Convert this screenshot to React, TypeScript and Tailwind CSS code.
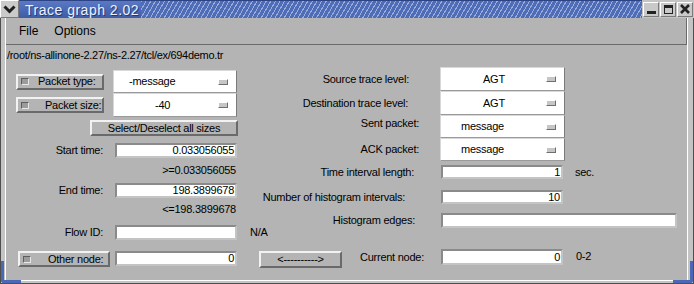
const font = "font-['Liberation_Sans',Arial,sans-serif]";

function Entry({ value = "", className = "" }: { value?: string; className?: string }) {
  return (
    <div
      className={`shrink-0 bg-white border-2 border-t-[#8a8a8a] border-l-[#8a8a8a] border-b-[#c4c4c4] border-r-[#c4c4c4] flex items-center justify-end pr-[1px] text-[11px] leading-none tracking-[-0.25px] text-black ${className}`}
    >
      {value}
    </div>
  );
}

function OptionBox({ text, className = "", textClass = "" }: { text: string; className?: string; textClass?: string }) {
  return (
    <div
      className={`shrink-0 bg-white border border-[#d8d8d8] border-r-[#7a7a7a] border-b-[#9a9a9a] flex items-center text-[11px] leading-none tracking-[-0.25px] text-black ${className}`}
    >
      <span className={textClass}>{text}</span>
      <span className="ml-auto mr-[8px] w-[10px] h-[6px] bg-[#c6c6c6] border border-t-white border-l-white border-b-[#6e6e6e] border-r-[#6e6e6e]" />
    </div>
  );
}

function Raised({ children, className = "" }: { children: React.ReactNode; className?: string }) {
  return (
    <div
      className={`shrink-0 bg-[#b4b4b4] border-2 border-t-[#f2f2f2] border-l-[#f2f2f2] border-b-[#6a6a6a] border-r-[#6a6a6a] flex items-center text-[11px] leading-none tracking-[-0.25px] text-black ${className}`}
    >
      {children}
    </div>
  );
}

function Indicator() {
  return (
    <span className="shrink-0 w-[8px] h-[7px] bg-[#9c9c9c] border border-t-[#5e5e5e] border-l-[#5e5e5e] border-b-[#e8e8e8] border-r-[#e8e8e8]" />
  );
}

function TitleButton({ children }: { children: React.ReactNode }) {
  return (
    <div className="w-[16px] h-[15px] bg-[#c9c9c9] border border-t-white border-l-white border-b-[#7a7a7a] border-r-[#7a7a7a] flex items-center justify-center">
      {children}
    </div>
  );
}

export default function App() {
  return (
    <div className={`w-[694px] h-[284px] flex flex-col bg-[#c4c4c4] relative overflow-hidden ${font}`}>
      {/* Title bar */}
      <div className="h-[18px] flex bg-[#4c69b4]">
        <div className="w-[19px] h-[18px] bg-[#cacaca] border border-t-white border-l-white border-b-[#7a7a7a] border-r-[#7a7a7a] flex items-center justify-center">
          <svg width="13" height="9" viewBox="0 0 13 9">
            <polyline points="1.5,1.5 6.5,6.5 11.5,1.5" fill="none" stroke="#1e1e1e" strokeWidth="3" />
          </svg>
        </div>
        <div className="w-[122px] pl-[6px] flex items-center bg-gradient-to-b from-[#5a78c4] to-[#3f5ca6] border-t border-[#2c4384]">
          <span className="text-[14px] leading-none tracking-[0.5px] text-[#eef2ff] [text-shadow:1px_1px_0_#233a78]">
            Trace graph 2.02
          </span>
        </div>
        <div className="flex-1 border-t border-[#2c4384] bg-[#4f6cb6] bg-[repeating-linear-gradient(120deg,rgba(230,238,255,0.5)_0px,rgba(230,238,255,0.5)_1px,transparent_1px,transparent_4px)]" />
        <div className="flex items-center gap-[1px] pl-[1px] pr-[1px] bg-[#c4c4c4]">
          <TitleButton>
            <span className="mt-[6px] w-[9px] h-[3px] bg-[#222]" />
          </TitleButton>
          <TitleButton>
            <span className="w-[9px] h-[9px] border border-[#222] border-t-[3px]" />
          </TitleButton>
          <TitleButton>
            <svg width="10" height="10" viewBox="0 0 10 10">
              <path d="M1 1 L9 9 M9 1 L1 9" stroke="#222" strokeWidth="2.6" />
            </svg>
          </TitleButton>
        </div>
      </div>

      {/* Frame */}
      <div className="flex-1 flex pl-[4px] pr-[5px] pb-[2px] border-l border-r border-b border-[#4e4e4e]">
        <div className="flex-1 flex flex-col bg-[#b4b4b4] border-l border-r border-b border-white">
          {/* Menu bar */}
          <div className="h-[27px] flex items-center pl-[13px] gap-[16px] border-b border-r border-[#6a6a6a] text-[12px] text-black leading-none">
            <span>File</span>
            <span>Options</span>
          </div>

          {/* Path */}
          <div className="h-[20px] flex items-center pl-[1px] text-[11px] tracking-[-0.3px] leading-none text-black">
            /root/ns-allinone-2.27/ns-2.27/tcl/ex/694demo.tr
          </div>

          <div className="flex text-[11px] leading-none tracking-[-0.25px] text-black">
            {/* Left column */}
            <div className="w-[240px] shrink-0 flex flex-col">
              <div className="mt-[5px] h-[23px] flex items-center">
                <Raised className="ml-[10px] w-[88px] h-[16px] pl-[3px]">
                  <Indicator />
                  <span className="ml-[9px]">Packet type:</span>
                </Raised>
                <OptionBox text="-message" className="ml-[9px] w-[124px] h-[23px]" textClass="pl-[15px]" />
              </div>
              <div className="h-[24px] flex items-center">
                <Raised className="ml-[10px] w-[88px] h-[16px] pl-[3px]">
                  <Indicator />
                  <span className="ml-[16px]">Packet size:</span>
                </Raised>
                <OptionBox text="-40" className="ml-[9px] w-[124px] h-[24px]" textClass="pl-[41px]" />
              </div>
              <Raised className="mt-[3px] ml-[84px] w-[148px] h-[16px] justify-center">
                Select/Deselect all sizes
              </Raised>
              <div className="mt-[7px] h-[15px] flex items-center">
                <span className="w-[97px] shrink-0 text-right">Start time:</span>
                <Entry value="0.033056055" className="ml-[12px] w-[122px] h-[15px]" />
              </div>
              <div className="mt-[5px] h-[14px] w-[230px] flex items-center justify-end">&gt;=0.033056055</div>
              <div className="mt-[6px] h-[15px] flex items-center">
                <span className="w-[97px] shrink-0 text-right">End time:</span>
                <Entry value="198.3899678" className="ml-[12px] w-[122px] h-[15px]" />
              </div>
              <div className="mt-[4px] h-[14px] w-[230px] flex items-center justify-end">&lt;=198.3899678</div>
              <div className="mt-[9px] h-[15px] flex items-center whitespace-nowrap">
                <span className="w-[97px] shrink-0 text-right">Flow ID:</span>
                <Entry className="ml-[12px] w-[122px] h-[15px]" />
                <span className="ml-[13px] shrink-0">N/A</span>
              </div>
              <div className="mt-[11px] h-[16px] flex items-start">
                <Raised className="ml-[12px] w-[92px] h-[16px] pl-[3px]">
                  <Indicator />
                  <span className="ml-[17px]">Other node:</span>
                </Raised>
                <Entry value="0" className="ml-[5px] w-[122px] h-[15px]" />
              </div>
            </div>

            {/* Right column */}
            <div className="flex-1 flex flex-col">
              <div className="mt-[2px] h-[24px] flex items-center">
                <span className="w-[194px] shrink-0 text-right pr-[31px]">Source trace level:</span>
                <OptionBox text="AGT" className="w-[125px] h-[24px]" textClass="pl-[42px]" />
              </div>
              <div className="h-[24px] flex items-center">
                <span className="w-[194px] shrink-0 text-right pr-[32px]">Destination trace level:</span>
                <OptionBox text="AGT" className="w-[125px] h-[24px]" textClass="pl-[42px]" />
              </div>
              <div className="h-[23px] flex items-center">
                <span className="w-[194px] shrink-0 text-right pr-[21px] -mt-[6px]">Sent packet:</span>
                <OptionBox text="message" className="w-[125px] h-[23px]" textClass="pl-[20px]" />
              </div>
              <div className="h-[23px] flex items-center">
                <span className="w-[194px] shrink-0 text-right pr-[21px]">ACK packet:</span>
                <OptionBox text="message" className="w-[125px] h-[23px]" textClass="pl-[20px]" />
              </div>
              <div className="mt-[4px] h-[14px] flex items-center">
                <span className="w-[195px] shrink-0 text-right pr-[27px]">Time interval length:</span>
                <Entry value="1" className="w-[122px] h-[14px]" />
                <span className="ml-[12px]">sec.</span>
              </div>
              <div className="mt-[11px] h-[14px] flex items-center">
                <span className="w-[195px] shrink-0 text-right pr-[36px]">Number of histogram intervals:</span>
                <Entry value="10" className="w-[122px] h-[14px]" />
              </div>
              <div className="mt-[9px] h-[15px] flex items-center">
                <span className="w-[195px] shrink-0 text-right pr-[26px]">Histogram edges:</span>
                <Entry className="w-[236px] h-[15px]" />
              </div>
              <div className="mt-[21px] h-[19px] flex">
                <Raised className="ml-[13px] w-[83px] h-[17px] self-end justify-center">&lt;----------&gt;</Raised>
                <span className="w-[99px] shrink-0 pl-[18px] self-end mb-[5px]">Current node:</span>
                <Entry value="0" className="w-[122px] h-[16px]" />
                <span className="ml-[13px] mt-[2px]">0-2</span>
              </div>
            </div>
          </div>
        </div>
      </div>

      {/* Resize corners */}
      <div className="absolute left-[1px] bottom-[1px] w-[20px] h-[22px] border-l-[3px] border-b-[3px] border-[#4a68b5] rounded-bl-[3px]" />
      <div className="absolute right-[1px] bottom-[1px] w-[20px] h-[22px] border-r-[3px] border-b-[3px] border-[#4a68b5] rounded-br-[3px]" />
    </div>
  );
}
